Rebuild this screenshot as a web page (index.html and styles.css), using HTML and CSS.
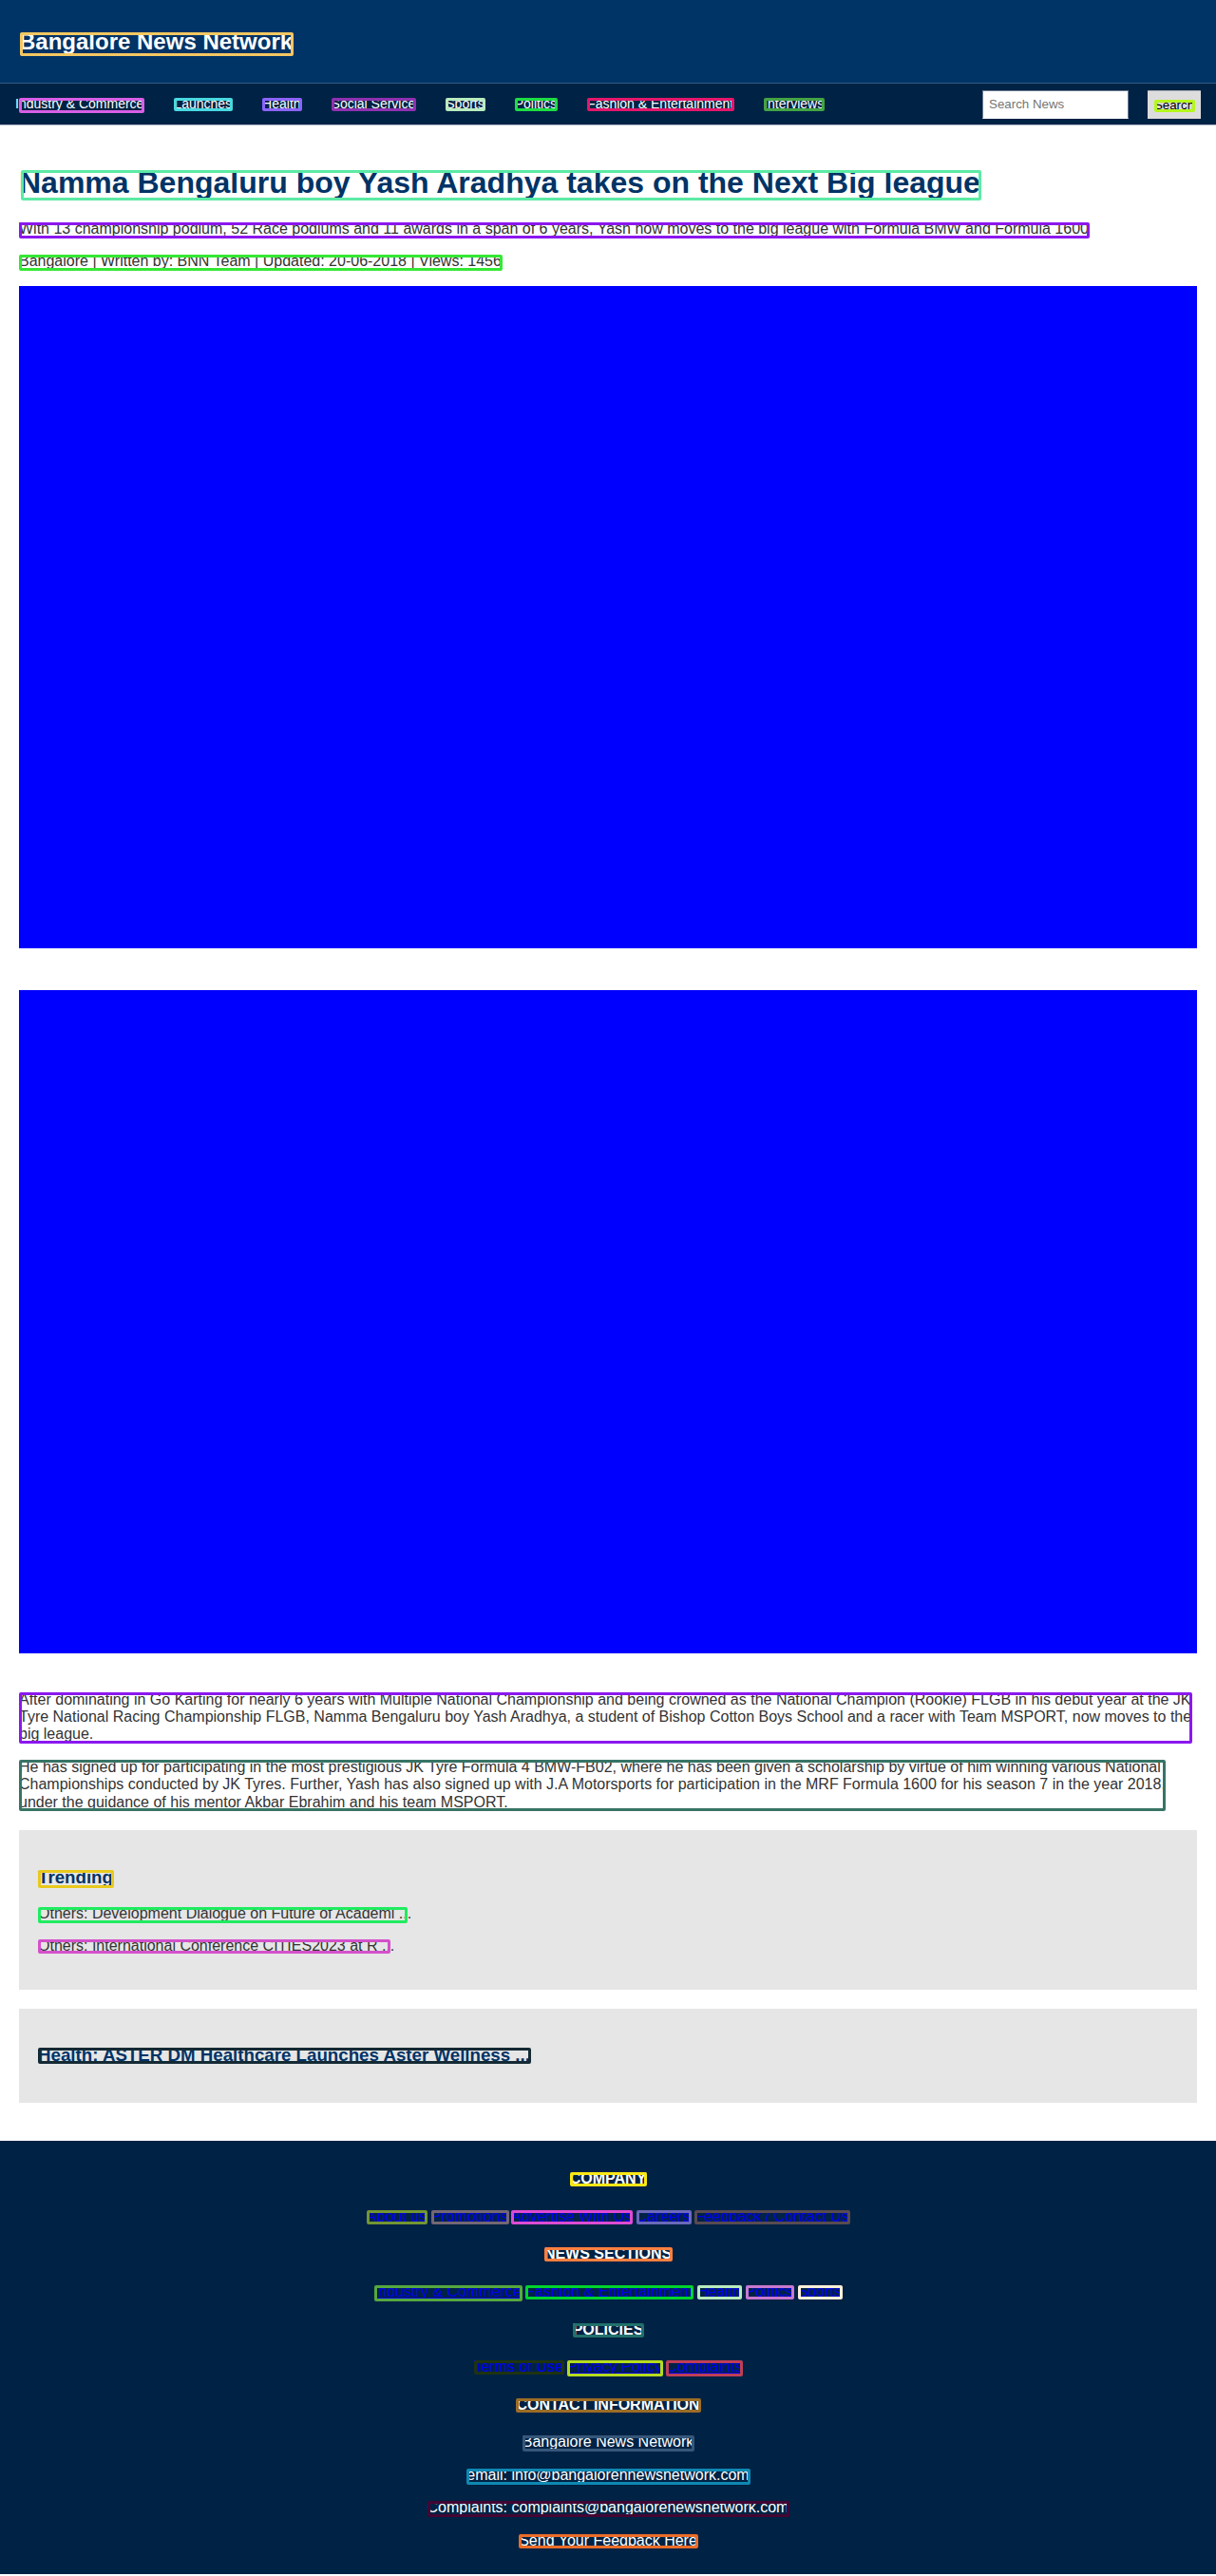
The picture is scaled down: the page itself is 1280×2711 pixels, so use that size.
FILE: index.html
```html
<!DOCTYPE html>
<html lang="en">
<head>
<meta charset="utf-8">
<meta name="viewport" content="width=device-width, initial-scale=1">
<title>Bangalore News Network</title>
<link rel="stylesheet" href="styles.css">
</head>
<body>
<header class="site-header">
  <h2 class="site-title"><span class="mark mark-title c-gold">Bangalore News Network</span></h2>
</header>
<nav class="nav">
  <ul class="nav-list">
    <li><a href="#"><span class="mark deep first c-orchid">Industry &amp; Commerce</span></a></li>
    <li><a href="#"><span class="mark c-aqua">Launches</span></a></li>
    <li><a href="#"><span class="mark c-violet">Health</span></a></li>
    <li><a href="#"><span class="mark c-purple">Social Service</span></a></li>
    <li><a href="#"><span class="mark c-mint">Sports</span></a></li>
    <li><a href="#"><span class="mark c-green">Politics</span></a></li>
    <li><a href="#"><span class="mark c-crimson">Fashion &amp; Entertainment</span></a></li>
    <li><a href="#"><span class="mark c-leaf">Interviews</span></a></li>
  </ul>
  <form class="search">
    <input class="search-input" type="text" placeholder="Search News" aria-label="Search News">
    <button class="search-button" type="button"><span class="mark c-lime">Search</span></button>
  </form>
</nav>
<main class="main">
  <h1><span class="mark mark-headline c-seafoam">Namma Bengaluru boy Yash Aradhya takes on the Next Big league</span></h1>
  <p><span class="mark deep c-indigo">With 13 championship podium, 52 Race podiums and 11 awards in a span of 6 years, Yash now moves to the big league with Formula BMW and Formula 1600</span></p>
  <p><span class="mark deep c-grass">Bangalore | Written by: BNN Team | Updated: 20-06-2018 | Views: 1456</span></p>
  <div class="media-list">
    <div class="media"></div>
    <div class="media"></div>
  </div>
  <p class="mark mark-block wide c-indigo">After dominating in Go Karting for nearly 6 years with Multiple National Championship and being crowned as the National Champion (Rookie) FLGB in his debut year at the JK Tyre National Racing Championship FLGB, Namma Bengaluru boy Yash Aradhya, a student of Bishop Cotton Boys School and a racer with Team MSPORT, now moves to the big league.</p>
  <p class="mark mark-block narrow c-pine">He has signed up for participating in the most prestigious JK Tyre Formula 4 BMW-FB02, where he has been given a scholarship by virtue of him winning various National Championships conducted by JK Tyres. Further, Yash has also signed up with J.A Motorsports for participation in the MRF Formula 1600 for his season 7 in the year 2018, under the guidance of his mentor Akbar Ebrahim and his team MSPORT.</p>
  <section class="card">
    <h3><span class="mark mark-card deep c-mustard">Trending</span></h3>
    <p><span class="mark deep clipped c-spring">Others: Development Dialogue on Future of Academi ...</span></p>
    <p><span class="mark clipped c-pink">Others: International Conference CITIES2023 at R ...</span></p>
  </section>
  <section class="card">
    <h3><span class="mark mark-card c-ink">Health: ASTER DM Healthcare Launches Aster Wellness ...</span></h3>
  </section>
</main>
<footer class="footer">
  <h4><span class="mark c-yellow">COMPANY</span></h4>
  <div class="links">
    <a href="#"><span class="mark c-olive">About us</span></a>
    <a href="#"><span class="mark c-taupe">Promotions</span></a>
    <a href="#"><span class="mark c-magenta">Advertise With Us</span></a>
    <a href="#"><span class="mark c-slate">Careers</span></a>
    <a href="#"><span class="mark c-umber">Feedback / Contact Us</span></a>
  </div>
  <h4><span class="mark c-coral">NEWS SECTIONS</span></h4>
  <div class="links">
    <a href="#"><span class="mark deep c-moss">Industry &amp; Commerce</span></a>
    <a href="#"><span class="mark c-emerald">Fashion &amp; Entertainment</span></a>
    <a href="#"><span class="mark c-mint">Health</span></a>
    <a href="#"><span class="mark c-lilac">Politics</span></a>
    <a href="#"><span class="mark c-cream">Sports</span></a>
  </div>
  <h4><span class="mark c-teal">POLICIES</span></h4>
  <div class="links">
    <a href="#"><span class="mark c-forest">Terms of Use</span></a>
    <a href="#"><span class="mark deep c-citron">Privacy Policy</span></a>
    <a href="#"><span class="mark deep c-rose">Complaints</span></a>
  </div>
  <h4><span class="mark c-bronze">CONTACT INFORMATION</span></h4>
  <p><span class="mark deep c-steel">Bangalore News Network</span></p>
  <p><span class="mark deep c-cyan">email: info@bangalorennewsnetwork.com</span></p>
  <p><span class="mark deep c-maroon">Complaints: complaints@bangalorenewsnetwork.com</span></p>
  <p><span class="mark c-orange">Send Your Feedback Here</span></p>
</footer>
</body>
</html>
```
FILE: styles.css
```css
* { box-sizing: border-box; }

body {
  margin: 0;
  background: #fff;
  color: #333;
  font-family: Arial, "Liberation Sans", sans-serif;
  font-size: 16px;
  line-height: 1.15;
}

.site-header {
  padding: 30px 20px;
  background: #003366;
  color: #fff;
}

.site-title {
  margin: 0;
  font-size: 24px;
  line-height: 27px;
}

.nav {
  display: flex;
  align-items: center;
  justify-content: space-between;
  height: 45px;
  padding: 0 16px;
  border-top: 1px solid #335c85;
  border-bottom: 1px solid #aab4c7;
  background: #002244;
}

.nav-list {
  display: flex;
  gap: 32px;
  margin: 0;
  padding: 0;
  list-style: none;
  font-size: 14px;
}

.nav-list a {
  color: #fff;
  text-decoration: none;
}

.search {
  display: flex;
  gap: 20px;
}

.search-input {
  width: 154px;
  height: 30px;
  padding: 0 6px;
  border: 1px solid #6b7a8f;
  border-bottom-color: #fff;
  border-radius: 0;
  background: #fff;
  font-family: inherit;
}

.search-button {
  width: 56px;
  height: 30px;
  padding: 0;
  border: 0;
  border-top: 1px solid #a4abb3;
  background: #ddd;
  color: #000;
  font-family: inherit;
}

.main {
  display: flow-root;
  padding: 20px;
}

h1, h3 { color: #003366; }

h1 {
  margin: 22px 0 21px;
  font-size: 32px;
}

.main > p { margin: 16px 0; }

.media-list {
  display: grid;
  gap: 44px;
  margin-bottom: 40px;
}

.media {
  aspect-ratio: 16 / 9;
  background: #0000ff;
}

.card {
  display: flow-root;
  margin: 20px 0;
  padding: 20px;
  background: #e6e6e6;
}

.card p { margin: 16px 0; }

.footer {
  display: flow-root;
  padding: 10px;
  background: #002244;
  color: #fff;
  text-align: center;
}

.footer p { margin: 16px 0; }

.links a { color: #0000ee; }

/* Coloured frame laid over a run of text */
.mark {
  --top: 2px;
  --right: -1px;
  --bottom: 0px;
  --left: 0px;
  position: relative;
}

.mark::after {
  content: "";
  position: absolute;
  inset: var(--top) var(--right) var(--bottom) var(--left);
  border: 3px solid var(--frame);
  border-radius: 2px;
  pointer-events: none;
}

.deep { --bottom: -2px; }
.clipped { --right: 4px; }
.first { --left: 4px; }
.mark-title { --top: 4px; --bottom: -2px; --left: 1px; }
.mark-headline { --top: 5px; --bottom: -1px; --left: 2px; }
.mark-card { --top: 3px; --bottom: 1px; }
.mark-card.deep { --bottom: -1px; }
.mark-block { --top: 1px; --bottom: 0px; --left: 0px; }
.wide { --right: 5px; }
.narrow { --right: 33px; }

.c-gold { --frame: #f4c761; }
.c-orchid { --frame: #d85fe6; }
.c-aqua { --frame: #48d9e0; }
.c-violet { --frame: #8c63ff; }
.c-purple { --frame: #9030b0; }
.c-mint { --frame: #b8ecbd; }
.c-green { --frame: #1ddc42; }
.c-crimson { --frame: #e5176b; }
.c-leaf { --frame: #43a443; }
.c-lime { --frame: #b5f71c; }
.c-seafoam { --frame: #5ceaa5; }
.c-indigo { --frame: #8b18ee; }
.c-grass { --frame: #35e735; }
.c-pine { --frame: #387465; }
.c-mustard { --frame: #e8c91c; }
.c-spring { --frame: #20ec60; }
.c-pink { --frame: #d451cb; }
.c-ink { --frame: #142a34; }
.c-yellow { --frame: #fae716; }
.c-olive { --frame: #739632; }
.c-taupe { --frame: #746773; }
.c-magenta { --frame: #de4bd2; }
.c-slate { --frame: #6b69bb; }
.c-umber { --frame: #594b50; }
.c-coral { --frame: #ff8040; }
.c-moss { --frame: #56a83e; }
.c-emerald { --frame: #00d42c; }
.c-lilac { --frame: #c878cf; }
.c-cream { --frame: #fff0d8; }
.c-teal { --frame: #22706b; }
.c-forest { --frame: #1e3411; }
.c-citron { --frame: #b5dc1e; }
.c-rose { --frame: #bd3f57; }
.c-bronze { --frame: #9c6d26; }
.c-steel { --frame: #365779; }
.c-cyan { --frame: #0f88b3; }
.c-maroon { --frame: #440633; }
.c-orange { --frame: #eb6c28; }
```
